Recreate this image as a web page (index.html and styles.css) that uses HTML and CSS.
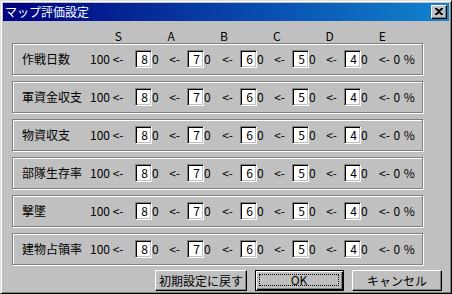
FILE: index.html
```html
<!doctype html>
<html lang="ja">
<head>
  <meta charset="UTF-8">
  <title>マップ評価設定</title>
  <link rel="stylesheet" href="styles.css">
</head>
<body>
  <div class="window">
    <div class="titlebar">
      <span class="title">マップ評価設定</span>
      <span class="close">
        <svg width="8" height="7" viewBox="0 0 8 7"><path d="M0 0h2l2 2 2-2h2v1L5 3.5 8 6v1H6L4 5 2 7H0V6l3-2.5L0 1z" fill="#000"/></svg>
      </span>
    </div>

    <div class="content">
      <div class="header">
        <span>S</span><span>A</span><span>B</span><span>C</span><span>D</span><span>E</span>
      </div>

      <div class="group">
        <span class="label">作戦日数</span>
        <span class="prefix">100 &lt;-</span>
        <span class="cell"><span class="edit">8</span><span class="zero">0</span><span class="arrow">&lt;-</span></span>
        <span class="cell"><span class="edit">7</span><span class="zero">0</span><span class="arrow">&lt;-</span></span>
        <span class="cell"><span class="edit">6</span><span class="zero">0</span><span class="arrow">&lt;-</span></span>
        <span class="cell"><span class="edit">5</span><span class="zero">0</span><span class="arrow">&lt;-</span></span>
        <span class="cell last"><span class="edit">4</span><span class="zero">0</span></span>
        <span class="suffix">&lt;- 0 %</span>
      </div>

      <div class="group">
        <span class="label">軍資金収支</span>
        <span class="prefix">100 &lt;-</span>
        <span class="cell"><span class="edit">8</span><span class="zero">0</span><span class="arrow">&lt;-</span></span>
        <span class="cell"><span class="edit">7</span><span class="zero">0</span><span class="arrow">&lt;-</span></span>
        <span class="cell"><span class="edit">6</span><span class="zero">0</span><span class="arrow">&lt;-</span></span>
        <span class="cell"><span class="edit">5</span><span class="zero">0</span><span class="arrow">&lt;-</span></span>
        <span class="cell last"><span class="edit">4</span><span class="zero">0</span></span>
        <span class="suffix">&lt;- 0 %</span>
      </div>

      <div class="group">
        <span class="label">物資収支</span>
        <span class="prefix">100 &lt;-</span>
        <span class="cell"><span class="edit">8</span><span class="zero">0</span><span class="arrow">&lt;-</span></span>
        <span class="cell"><span class="edit">7</span><span class="zero">0</span><span class="arrow">&lt;-</span></span>
        <span class="cell"><span class="edit">6</span><span class="zero">0</span><span class="arrow">&lt;-</span></span>
        <span class="cell"><span class="edit">5</span><span class="zero">0</span><span class="arrow">&lt;-</span></span>
        <span class="cell last"><span class="edit">4</span><span class="zero">0</span></span>
        <span class="suffix">&lt;- 0 %</span>
      </div>

      <div class="group">
        <span class="label">部隊生存率</span>
        <span class="prefix">100 &lt;-</span>
        <span class="cell"><span class="edit">8</span><span class="zero">0</span><span class="arrow">&lt;-</span></span>
        <span class="cell"><span class="edit">7</span><span class="zero">0</span><span class="arrow">&lt;-</span></span>
        <span class="cell"><span class="edit">6</span><span class="zero">0</span><span class="arrow">&lt;-</span></span>
        <span class="cell"><span class="edit">5</span><span class="zero">0</span><span class="arrow">&lt;-</span></span>
        <span class="cell last"><span class="edit">4</span><span class="zero">0</span></span>
        <span class="suffix">&lt;- 0 %</span>
      </div>

      <div class="group">
        <span class="label">撃墜</span>
        <span class="prefix">100 &lt;-</span>
        <span class="cell"><span class="edit">8</span><span class="zero">0</span><span class="arrow">&lt;-</span></span>
        <span class="cell"><span class="edit">7</span><span class="zero">0</span><span class="arrow">&lt;-</span></span>
        <span class="cell"><span class="edit">6</span><span class="zero">0</span><span class="arrow">&lt;-</span></span>
        <span class="cell"><span class="edit">5</span><span class="zero">0</span><span class="arrow">&lt;-</span></span>
        <span class="cell last"><span class="edit">4</span><span class="zero">0</span></span>
        <span class="suffix">&lt;- 0 %</span>
      </div>

      <div class="group">
        <span class="label">建物占領率</span>
        <span class="prefix">100 &lt;-</span>
        <span class="cell"><span class="edit">8</span><span class="zero">0</span><span class="arrow">&lt;-</span></span>
        <span class="cell"><span class="edit">7</span><span class="zero">0</span><span class="arrow">&lt;-</span></span>
        <span class="cell"><span class="edit">6</span><span class="zero">0</span><span class="arrow">&lt;-</span></span>
        <span class="cell"><span class="edit">5</span><span class="zero">0</span><span class="arrow">&lt;-</span></span>
        <span class="cell last"><span class="edit">4</span><span class="zero">0</span></span>
        <span class="suffix">&lt;- 0 %</span>
      </div>

      <div class="actions">
        <span class="btn reset">初期設定に戻す</span>
        <span class="btn default"><span class="focus">OK</span></span>
        <span class="btn">キャンセル</span>
      </div>
    </div>
  </div>
</body>
</html>
```

FILE: styles.css
```css
html, body {
  margin: 0;
  padding: 0;
  background: #c0c0c0;
}
body {
  font-family: "Noto Sans CJK JP", "Noto Sans", sans-serif;
  font-size: 12px;
  line-height: 14px;
  color: #000;
}
.window {
  width: 452px;
  height: 294px;
  box-sizing: border-box;
  border: 1px solid;
  border-color: #dfdfdf #000 #000 #dfdfdf;
  box-shadow: inset 1px 1px #fff, inset -1px -1px #808080;
  padding: 2px;
  background: #c0c0c0;
}
.titlebar {
  height: 18px;
  display: flex;
  align-items: center;
  background: linear-gradient(to right, #000080, #1084d0);
  color: #fff;
}
.title {
  padding-left: 2px;
  flex: 1;
}
.close {
  width: 16px;
  height: 14px;
  box-sizing: border-box;
  margin-right: 2px;
  background: #c0c0c0;
  border: 1px solid;
  border-color: #fff #000 #000 #fff;
  box-shadow: inset -1px -1px #808080;
  display: flex;
  align-items: center;
  justify-content: center;
  padding: 0 1px 1px 0;
}

.content {
  padding-left: 9px;
}
.header {
  display: flex;
  padding-top: 8px;
  padding-left: 80px;
  height: 14px;
}
.header span {
  width: 52.8px;
  text-align: center;
}

.group {
  width: 411px;
  height: 32px;
  box-sizing: border-box;
  border: 1px solid #808080;
  box-shadow: inset 1px 1px #fff, 1px 1px #fff;
  margin-bottom: 6px;
  display: flex;
  align-items: center;
  padding-left: 9px;
  padding-bottom: 1px;
}
.label {
  width: 68px;
}
.prefix {
  width: 45px;
}
.cell {
  width: 52px;
  display: flex;
  align-items: center;
}
.cell:nth-of-type(4) {
  width: 53px;
}
.cell.last {
  width: 35px;
}
.edit {
  width: 17px;
  height: 18px;
  box-sizing: border-box;
  background: #fff;
  border: 1px solid;
  border-color: #808080 #fff #fff #808080;
  box-shadow: inset 1px 1px #000, inset -1px -1px #c0c0c0;
  text-align: right;
  padding-right: 3px;
  line-height: 16px;
}
.zero {
  width: 7px;
}
.arrow {
  flex: 1;
  text-align: right;
  padding-right: 7px;
}
.suffix {
  word-spacing: 1px;
}

.actions {
  display: flex;
  gap: 8px;
  padding-left: 143px;
  margin-top: -1px;
}
.btn {
  width: 90px;
  height: 21px;
  box-sizing: border-box;
  border: 1px solid;
  border-color: #fff #000 #000 #fff;
  box-shadow: inset -1px -1px #808080;
  display: flex;
  align-items: center;
  justify-content: center;
}
.btn.reset {
  width: 92px;
}
.btn.default {
  width: 89px;
  border: 1px solid #000;
  box-shadow: inset 1px 1px #fff, inset -1px -1px #000, inset -2px -2px #808080;
  padding: 3px 4px 4px 3px;
}
.focus {
  flex: 1;
  align-self: stretch;
  border: 1px dotted #000;
  display: flex;
  align-items: center;
  justify-content: center;
}
```
